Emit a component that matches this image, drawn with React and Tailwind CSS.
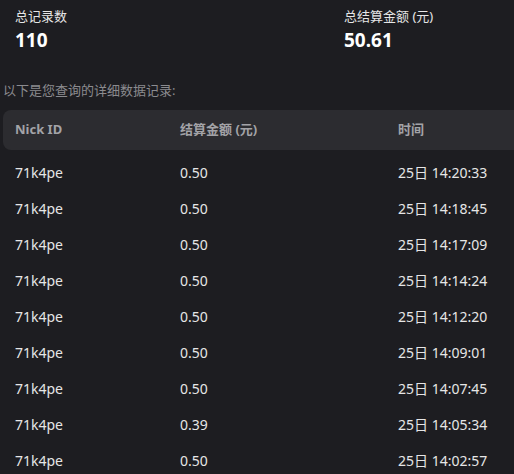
const rows = [
  { id: "71k4pe", amount: "0.50", time: "25日 14:20:33" },
  { id: "71k4pe", amount: "0.50", time: "25日 14:18:45" },
  { id: "71k4pe", amount: "0.50", time: "25日 14:17:09" },
  { id: "71k4pe", amount: "0.50", time: "25日 14:14:24" },
  { id: "71k4pe", amount: "0.50", time: "25日 14:12:20" },
  { id: "71k4pe", amount: "0.50", time: "25日 14:09:01" },
  { id: "71k4pe", amount: "0.50", time: "25日 14:07:45" },
  { id: "71k4pe", amount: "0.39", time: "25日 14:05:34" },
  { id: "71k4pe", amount: "0.50", time: "25日 14:02:57" },
]

const App = () => {
  return (
    <div
      className="w-[514px] h-[474px] overflow-hidden bg-[#1d1d21] text-[#e6e6e6]"
      style={{ fontFamily: '"Noto Sans", "Noto Sans CJK SC", sans-serif' }}
    >
      <div className="flex pt-[6px] pl-[15px]">
        <div className="w-[329px]">
          <div className="text-[13px] leading-[20px]">总记录数</div>
          <div className="text-[19px] font-bold leading-[28px] text-white">110</div>
        </div>
        <div>
          <div className="text-[13px] leading-[20px]">总结算金额 (元)</div>
          <div className="text-[19px] font-bold leading-[28px] text-white">50.61</div>
        </div>
      </div>

      <div className="mt-[26px] pl-[3px] text-[13px] leading-[20px] text-[#8b8b8f]">
        以下是您查询的详细数据记录:
      </div>

      <div className="mt-[10px] ml-[3px]">
        <div className="flex items-center h-[40px] rounded-l-[8px] bg-[#2c2c30] pl-[12px] text-[13px] font-bold text-[#a3a3a7]">
          <div className="w-[165px]">Nick ID</div>
          <div className="w-[218px]">结算金额 (元)</div>
          <div>时间</div>
        </div>
        <div className="mt-[4px]">
          {rows.map((row, i) => (
            <div key={i} className="flex items-center h-[36px] pl-[12px] text-[14px] text-[#e6e6e6]">
              <div className="w-[165px]">{row.id}</div>
              <div className="w-[218px]">{row.amount}</div>
              <div>{row.time}</div>
            </div>
          ))}
        </div>
      </div>
    </div>
  )
}

export default App
